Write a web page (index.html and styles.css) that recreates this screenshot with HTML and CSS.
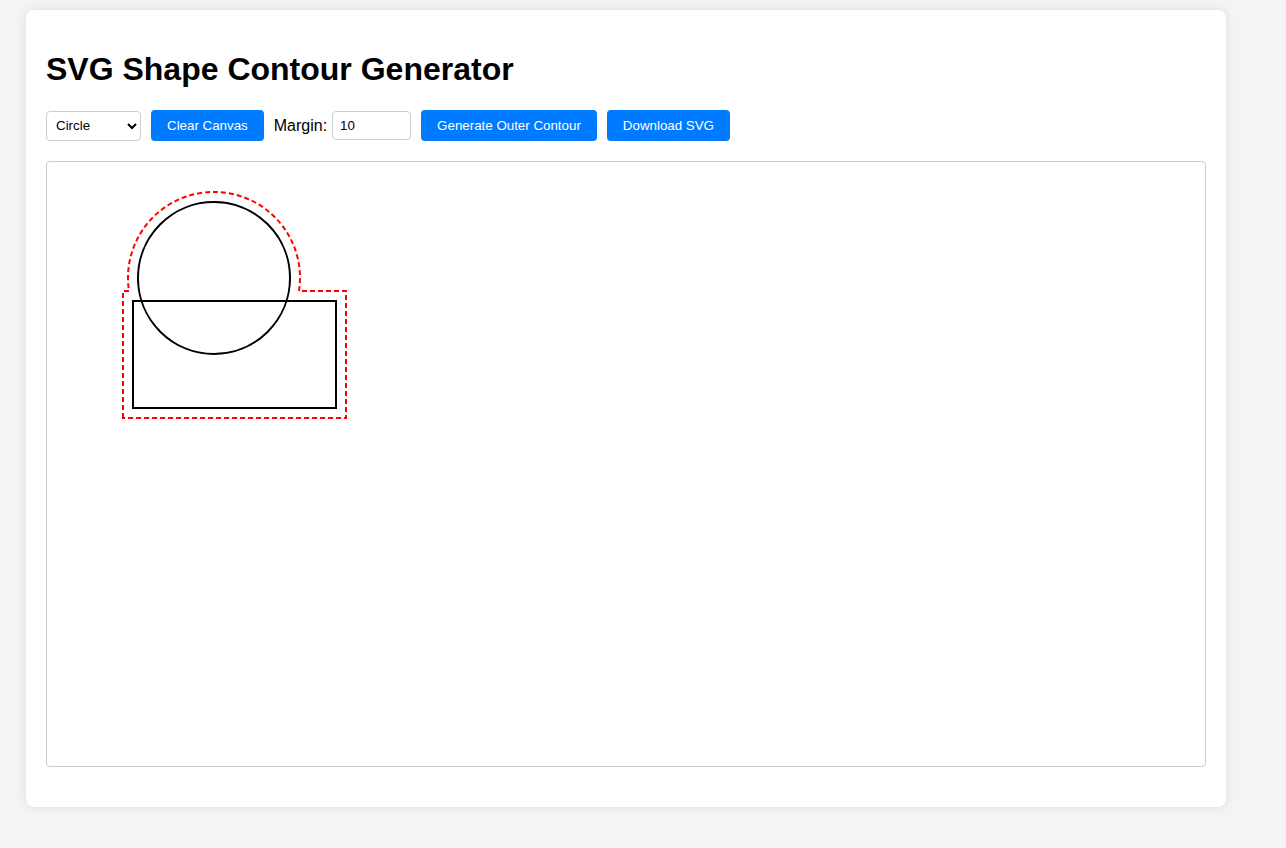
FILE: index.html
```html
<!DOCTYPE html>
<html lang="en">
<head>
<meta charset="utf-8">
<title>SVG Shape Contour Generator</title>
<link rel="stylesheet" href="styles.css">
</head>
<body>
<div class="container">
  <h1 class="title">SVG Shape Contour Generator</h1>
  <div class="toolbar">
    <select class="shape-select">
      <option>Circle</option>
      <option>Rectangle</option>
    </select>
    <button class="btn">Clear Canvas</button>
    <div class="margin-group">
      <label class="margin-label">Margin:</label>
      <input class="margin-input" type="number" value="10">
    </div>
    <button class="btn">Generate Outer Contour</button>
    <button class="btn">Download SVG</button>
  </div>
  <div class="canvas-wrap">
    <svg class="canvas" width="1158" height="600" viewBox="0 0 1158 600">
      <circle cx="167" cy="116" r="76" fill="none" stroke="#000" stroke-width="2"/>
      <rect x="86" y="139" width="203" height="107" fill="none" stroke="#000" stroke-width="2"/>
      <path d="M76,256 L76,129 L82,129 A86,86 0 1,1 252,129 L299,129 L299,256 Z" fill="none" stroke="#ff0000" stroke-width="2" stroke-dasharray="5,3"/>
    </svg>
  </div>
</div>
</body>
</html>
```
FILE: styles.css
```css
html, body {
  margin: 0;
  padding: 0;
}
body {
  background: #f4f4f4;
  font-family: "Liberation Sans", Arial, sans-serif;
  padding: 10px 26px;
}
.container {
  width: 1200px;
  box-sizing: border-box;
  background: #fff;
  padding: 20px;
  border-radius: 8px;
  box-shadow: 0 0 10px rgba(0, 0, 0, 0.1);
}
.title {
  font-size: 32px;
  font-weight: bold;
  margin: 21px 0 22px;
  line-height: 37px;
  color: #000;
}
.toolbar {
  display: flex;
  align-items: center;
  gap: 10px;
  margin-bottom: 20px;
  height: 31px;
}
.shape-select {
  width: 95px;
  height: 30px;
  box-sizing: border-box;
  padding: 5px;
  font-family: "Liberation Sans", Arial, sans-serif;
  font-size: 13.33px;
  border: 1px solid #ccc;
  border-radius: 4px;
  background: #fff;
  color: #000;
}
.btn {
  height: 31px;
  box-sizing: border-box;
  padding: 0 16px;
  font-family: "Liberation Sans", Arial, sans-serif;
  font-size: 13.33px;
  color: #fff;
  background: #007bff;
  border: none;
  border-radius: 4px;
}
.margin-group {
  display: flex;
  align-items: center;
  gap: 5px;
}
.margin-label {
  font-size: 16px;
  color: #000;
}
.margin-input {
  width: 79px;
  height: 29px;
  box-sizing: border-box;
  padding: 5px 7px;
  font-family: "Liberation Sans", Arial, sans-serif;
  font-size: 13.33px;
  border: 1px solid #ccc;
  border-radius: 4px;
  color: #000;
}
.canvas-wrap {
  border: 1px solid #ccc;
  border-radius: 4px;
  margin-bottom: 20px;
  height: 604px;
}
.canvas {
  display: block;
}
```
